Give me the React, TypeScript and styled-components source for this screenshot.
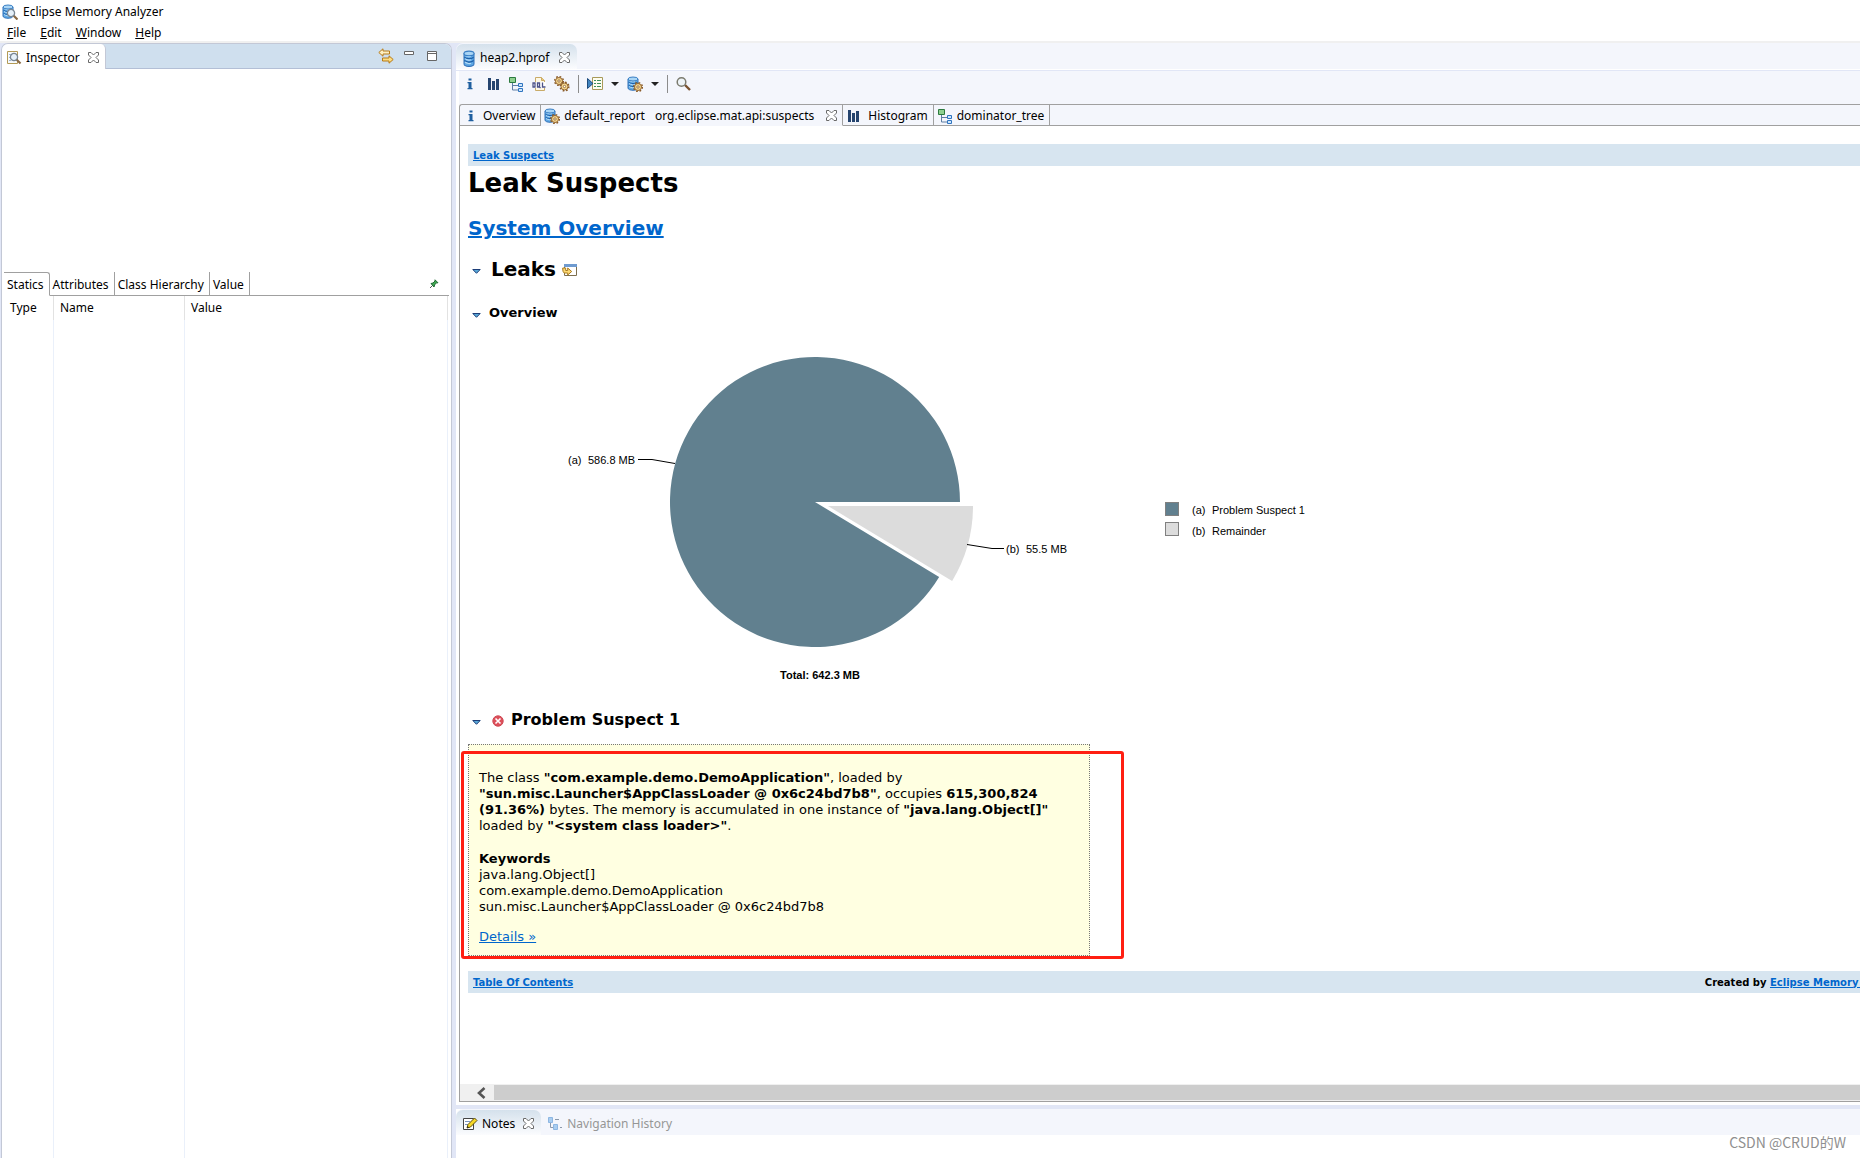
import React from "react";
import styled, { createGlobalStyle, css } from "styled-components";

const ui = `"Noto Sans", "Noto Sans CJK SC", sans-serif`;
const doc = `"DejaVu Sans", sans-serif`;
const chartFont = `"Liberation Sans", sans-serif`;

const c = {
  sash: "#e1e6f6",
  pane: "#f4f6fc",
  header: "#cfdfee",
  edge: "#c3c8d6",
  line: "#a0a0a0",
  link: "#0066cc",
  crumb: "#d7e5f0",
  note: "#ffffe1",
  slate: "#61808f",
  silver: "#dcdcdc",
};

const Global = createGlobalStyle`
  *, *::before, *::after { box-sizing: border-box; }
  body { margin: 0; background: #fff; color: #000; font: 12px/16px ${ui}; overflow: hidden; }
  button { margin: 0; padding: 0; border: 0; background: none; color: inherit; font: inherit; }
  svg { display: block; flex: none; }
`;

const Window = styled.div`
  position: relative;
  display: flex;
  flex-direction: column;
  height: 100vh;
`;

const TitleBar = styled.header`
  display: flex;
  align-items: center;
  gap: 5px;
  height: 24px;
  padding-left: 2px;
`;

const MenuBar = styled.nav`
  display: flex;
  align-items: center;
  gap: 14px;
  height: 19px;
  padding-left: 7px;
  border-bottom: 2px solid #f0f0f0;
`;

const MenuItem = styled.button`
  white-space: nowrap;
`;

const Workbench = styled.div`
  flex: 1;
  min-height: 0;
  display: grid;
  grid-template-columns: minmax(300px, 452px) minmax(0, 1fr);
  gap: 4px;
  background: ${c.sash};
`;

const Inspector = styled.aside`
  display: flex;
  flex-direction: column;
  margin-left: 1px;
  border: 1px solid ${c.edge};
  border-bottom: 0;
  border-radius: 7px 7px 0 0;
  background: #fff;
  overflow: hidden;
`;

const InspectorHead = styled.div`
  display: flex;
  justify-content: space-between;
  height: 25px;
  background: ${c.header};
`;

const InspectorTab = styled.div`
  display: flex;
  align-items: center;
  gap: 4px;
  padding: 2px 6px 0 4px;
  border-right: 1px solid ${c.edge};
  border-radius: 5px 5px 0 0;
  background: #fff;
`;

const HeadFill = styled.div`
  flex: 1;
  display: flex;
  justify-content: flex-end;
  align-items: center;
  gap: 7px;
  padding-right: 11px;
  border-bottom: 1px solid #b3bfd6;
`;

const IconButton = styled.button`
  display: flex;
  align-items: center;
  justify-content: center;
`;

const TabLabel = styled.span<{ $gap?: number }>`
  margin-right: ${(p) => p.$gap ?? 4}px;
  white-space: nowrap;
`;

const ObjectArea = styled.div`
  height: 203px;
`;

const DetailTabs = styled.div`
  display: flex;
  height: 24px;
  padding-left: 2px;
`;

const DetailTab = styled.button<{ $active?: boolean }>`
  padding: 2px 5px 0 3px;
  border-right: 1px solid ${c.line};
  border-bottom: 1px solid ${(p) => (p.$active ? "transparent" : c.line)};
  ${(p) =>
    p.$active &&
    css`
      padding-top: 1px;
      border-top: 1px solid ${c.line};
      border-top-right-radius: 3px;
    `}
`;

const DetailRest = styled.div`
  flex: 1;
  display: flex;
  align-items: center;
  justify-content: flex-end;
  margin-right: 2px;
  padding-right: 10px;
  border-bottom: 1px solid ${c.line};
`;

const Fields = styled.div`
  flex: 1;
  display: flex;
  padding-right: 3px;
`;

const FieldTable = styled.table`
  width: 100%;
  border-collapse: separate;
  border-spacing: 0;
  table-layout: fixed;

  th {
    height: 24px;
    padding: 0 6px;
    border-right: 1px solid #e2e2e2;
    font-weight: normal;
    text-align: left;
  }
  th:first-child {
    width: 52px;
    padding-left: 8px;
  }
  th:nth-child(2) {
    width: 131px;
  }
  td {
    border-right: 1px solid #eaf0fa;
  }
`;

const Main = styled.main`
  display: flex;
  flex-direction: column;
  min-width: 0;
  min-height: 0;
`;

const TabStrip = styled.div`
  display: flex;
  height: 27px;
  margin-bottom: 1px;
  padding-top: 1px;
  border-radius: 7px 0 0 0;
  border-bottom: 1px solid #fff;
  background: ${c.pane};
`;

const ViewTab = styled.button<{ $active?: boolean }>`
  display: flex;
  align-items: center;
  gap: 4px;
  padding: 2px 7px 0 6px;
  color: ${(p) => (p.$active ? "#000" : "#969696")};
  ${(p) =>
    p.$active &&
    css`
      border-radius: 7px 7px 0 0;
      background: linear-gradient(#d5e1ec, #fbfcfe);
    `}
`;

const Editor = styled.section`
  flex: 1;
  display: flex;
  flex-direction: column;
  min-height: 0;
  padding: 0 0 3px 3px;
  background: #fff;
  overflow: hidden;
`;

const Toolbar = styled.div`
  display: flex;
  align-items: center;
  gap: 8px;
  height: 33px;
  padding: 0 0 8px 3px;
  background: ${c.pane};
`;

const Divider = styled.span`
  width: 1px;
  height: 18px;
  background: #8c8c8c;
`;

const Caret = styled.span`
  width: 0;
  border: 4px solid transparent;
  border-top-color: #222;
  border-bottom: 0;
`;

const Pages = styled.div`
  display: flex;
  height: 22px;
  border-top: 1px solid ${c.line};
  border-left: 1px solid ${c.line};
  border-top-left-radius: 3px;
  background: ${c.pane};
`;

const PageTab = styled.button<{ $active?: boolean }>`
  display: flex;
  align-items: center;
  gap: 4px;
  padding: 1px 5px 0 3px;
  border-right: 1px solid ${c.line};
  border-bottom: 1px solid ${(p) => (p.$active ? "transparent" : c.line)};
`;

const PagesRest = styled.div`
  flex: 1;
  border-bottom: 1px solid ${c.line};
`;

const Browser = styled.div`
  flex: 1;
  display: flex;
  flex-direction: column;
  min-height: 0;
  border-left: 1px solid ${c.line};
  border-bottom: 1px solid ${c.line};
`;

const Viewport = styled.div`
  flex: 1;
  min-height: 0;
  overflow: hidden;
`;

const Report = styled.article`
  width: calc(100% + 56px);
  padding: 18px 0 0 8px;
  font: 13px/16px ${doc};

  a {
    color: ${c.link};
  }
`;

const Crumbs = styled.div`
  display: flex;
  align-items: center;
  justify-content: space-between;
  height: 22px;
  padding: 1px 5px 0;
  background: ${c.crumb};
  font-size: 10px;
  font-weight: bold;
  white-space: nowrap;
`;

const Title = styled.h1`
  margin: 0 0 15px;
  font-size: 26px;
  line-height: 34px;
`;

const Heading = styled.h2`
  display: flex;
  align-items: center;
  margin: 0 0 15px;
  font-size: 20px;
  line-height: 26px;
`;

const Section = styled(Heading)`
  gap: 6px;
  margin: 0 0 23px;
  padding-left: 4px;
`;

const SubSection = styled.h3`
  display: flex;
  align-items: center;
  gap: 4px;
  margin: 0;
  padding-left: 4px;
  font-size: 13px;
  line-height: 16px;
`;

const Problem = styled(SubSection)`
  gap: 6px;
  margin-bottom: 14px;
  font-size: 16px;
  line-height: 20px;
`;

const Twisty = styled.button`
  margin-right: 4px;
  padding-top: 4px;
`;

const NoteFrame = styled.div`
  position: relative;
  width: 622px;
  margin-bottom: 15px;
`;

const Note = styled.div`
  padding: 25px 10px 10px;
  border: 1px dotted #777;
  background: ${c.note};

  p {
    margin: 0 0 17px;
  }
  p:nth-child(2) {
    margin-bottom: 14px;
  }
  a {
    display: block;
    width: max-content;
  }
`;

const Marker = styled.div`
  position: absolute;
  inset: 7px -34px -3px -7px;
  border: 3px solid #ff1f12;
  border-radius: 3px;
`;

const ScrollBar = styled.div`
  display: flex;
  height: 17px;
  background: #f0f0f0;
`;

const ScrollArrow = styled.button`
  display: flex;
  align-items: center;
  justify-content: center;
  width: 34px;
  padding-left: 8px;
`;

const ScrollThumb = styled.div`
  flex: 1;
  margin: 1px 0;
  background: #cdcdcd;
`;

const NotesPane = styled.section`
  height: 49px;
  margin-top: 4px;
  background: #fff;
`;

const Watermark = styled.div`
  position: absolute;
  right: 14px;
  bottom: 6px;
  color: #8f8f8f;
  font: 14px/20px "Noto Sans CJK SC", sans-serif;
`;

/* ---------- icons ---------- */

const Svg = ({ w = 16, h = 16, children }: { w?: number; h?: number; children: React.ReactNode }) => (
  <svg width={w} height={h} viewBox={`0 0 ${w} ${h}`} fill="none" aria-hidden="true">
    {children}
  </svg>
);

const Cylinder = () => (
  <>
    <path d="M1 3v9c0 3 10 3 10 0V3z" fill="#5fa8e4" stroke="#2f70b8" />
    <path d="M1.500 6c1 2 8 2 9 0M1.500 9c1 2 8 2 9 0" stroke="#1d5fa8" />
    <path d="M2 7.500c2 1.500 5 1.500 6 1M2 10.500c2 1.500 5 1.500 6 1M2 4.500c2 1.500 5 1.500 6 1" stroke="#b5dcf8" />
    <ellipse cx="6" cy="3" rx="5" ry="2" fill="#a9d5f5" stroke="#3a7fc4" />
  </>
);

const Gear = ({ x, y }: { x: number; y: number }) => (
  <g transform={`translate(${x} ${y})`}>
    <circle r="4.300" stroke="#8a5c2a" strokeWidth="1.600" strokeDasharray="1.690 1.690" />
    <circle r="3.500" fill="#f6d893" stroke="#94652e" />
    <circle r="1.200" fill="#fff" stroke="#8a5a1e" strokeWidth=".8" />
  </g>
);

const Lens = ({ x, y }: { x: number; y: number }) => (
  <g transform={`translate(${x} ${y})`}>
    <path d="M2.500 2.500 6.500 6.500" stroke="#8a6a45" strokeWidth="2.200" />
    <circle r="3.600" fill="#e6f1fa" stroke="#7a8794" strokeWidth="1.300" />
  </g>
);

const AppIcon = () => (
  <Svg>
    <Cylinder />
    <Lens x={9} y={9} />
  </Svg>
);

const InspectorIcon = () => (
  <Svg>
    <path d="M1.500 1.500h10v12h-10z" fill="#f7fafd" stroke="#b39a55" />
    <path d="M3 4.500h4M3 7.500h2M3 10.500h2" stroke="#9fb6d4" />
    <Lens x={8} y={7} />
  </Svg>
);

const Close = () => (
  <Svg w={11} h={11}>
    <path
      d="M.5.5h2.500l2.500 2.500L8 .5h2.500V3L8 5.500 10.500 8v2.500H8L5.500 8 3 10.500H.5V8L3 5.500.5 3z"
      fill="#fff"
      stroke="#6a6a6a"
    />
  </Svg>
);

const LinkArrows = () => (
  <Svg>
    <path d="M.8 4.500 5 .8V3h6.500v3H5v2.200z" fill="#fdf0c4" stroke="#b77a16" />
    <path d="M15.200 11.500 11 7.800V10H4.500v3H11v2.200z" fill="#fcdc80" stroke="#b77a16" />
  </Svg>
);

const Minimize = () => (
  <Svg>
    <path d="M3.500 3.500h9v3h-9z" fill="#fff" stroke="#666" />
  </Svg>
);

const Maximize = () => (
  <Svg>
    <path d="M3.500 3.500h9v9h-9zM3.500 5.500h9" fill="#fff" stroke="#666" />
  </Svg>
);

const Pin = () => (
  <Svg w={10} h={10}>
    <path d="m1 9 3-3" stroke="#555" />
    <path d="m2 4.500 2-.5 2-2V.8l3 3H7.500l-1.800 2L5 8z" fill="#3fa650" stroke="#1f6b34" />
  </Svg>
);

const HeapIcon = () => (
  <Svg w={14} h={18}>
    <g transform="translate(1 1) scale(1 1.150)">
      <Cylinder />
    </g>
  </Svg>
);

const Info = () => (
  <Svg>
    <path d="M6.500 2.500h3v2h-3zM5.500 6h4v6h1v1.200h-5V12h1V7.200h-1z" fill="#1f5f9f" />
  </Svg>
);

const Bars = ({ w }: { w: number }) => (
  <Svg w={w} h={12}>
    <path d="M2 0h3v12h-3zM6 3h3v9h-3zM10 1h3v11h-3z" fill="#25446f" />
  </Svg>
);

const Tree = () => (
  <Svg>
    <path d="M4.500 7v7H10M4.500 9.500H10" stroke="#5f7fa5" />
    <path d="M1.500 1.500h6v5h-6z" fill="#8fd08f" stroke="#2c7a3f" />
    <path d="M10.500 7.500h4v3h-4zM10.500 12.500h4v3h-4z" fill="#cfe6fb" stroke="#2f74c0" />
  </Svg>
);

const Oql = () => (
  <Svg w={14}>
    <path d="M3.500 1.500h6l3 3v10h-9z" fill="#fdf8e6" stroke="#c9ab68" />
    <path d="M9.500 1.500v3h3" fill="#eac97c" stroke="#c9ab68" />
    <path d="M0 6h14v6H0z" fill="#fff" />
    <path
      d="M1 7h2v4H1zM5.500 7h2v4h-2zM6.500 10l2 2M10.500 6.500V11h3"
      stroke="#4c5288"
      strokeWidth="1.300"
    />
  </Svg>
);

const Gears = () => (
  <Svg>
    <Gear x={5} y={5} />
    <Gear x={10.5} y={10.5} />
  </Svg>
);

const Run = () => (
  <Svg>
    <path d="M5.500 1.500h10v12h-10z" fill="#fdfdf0" stroke="#a89a5a" />
    <path d="M7 4.500h2M7 7.500h2M7 10.500h2M10 4.500h4M10 7.500h4M10 10.500h4" stroke="#3f8f5a" />
    <path d="M.5 2.500v10L6 7.500z" fill="#3f83bf" stroke="#1c4a7c" />
  </Svg>
);

const HeapGear = () => (
  <Svg>
    <Cylinder />
    <Gear x={11} y={11} />
  </Svg>
);

const Search = () => (
  <Svg>
    <path d="m9 9 5 5" stroke="#7a5230" strokeWidth="2.400" />
    <circle cx="5.500" cy="6" r="4.300" fill="#eef4f8" stroke="#7b7b6f" strokeWidth="1.500" />
  </Svg>
);

const Twist = () => (
  <Svg w={9} h={5}>
    <path d="M.8.5h7.400L4.500 4.300z" fill="#58a8d8" stroke="#1c3d78" />
  </Svg>
);

const OpenIn = () => (
  <Svg>
    <path d="M2.500 4.500h12v10h-12z" fill="#fff" stroke="#7d6f50" />
    <path d="M2 3h13v3H2z" fill="#6f9bd0" />
    <path d="M.7 7h3v2.500h2V7l4 3.500-4 3.500v-2h-3c-1.500 0-2-2-2-5z" fill="#fbd873" stroke="#a97a1d" />
  </Svg>
);

const ErrorIcon = () => (
  <Svg w={14} h={14}>
    <circle cx="7" cy="8" r="5.200" fill="#dd4f5a" stroke="#cf4a55" />
    <path d="m4.500 5.500 5 5M9.500 5.500l-5 5" stroke="#fff" strokeWidth="1.600" />
  </Svg>
);

const NotesIcon = () => (
  <Svg>
    <path d="M1.500 2.500h10v11h-10z" fill="#fff" stroke="#444" />
    <path d="M3 5.500h5M3 8.500h3" stroke="#7b95bd" />
    <path d="m5 12 1-3.500L12.500 2 15 4.500 8.500 11z" fill="#f7d927" stroke="#5c4c10" />
    <path d="m5 12 .6-2 1.400 1.400z" fill="#222" />
  </Svg>
);

const HistoryIcon = () => (
  <Svg>
    <path d="M3.500 7v4.500H6M8 3.500h4M13 11.500h2" stroke="#8c99ab" />
    <path d="M1.500 1.500h4v5h-4zM6.500 8.500h4v5h-4z" fill="#a9cdf0" stroke="#8db6e2" />
  </Svg>
);

const ArrowLeft = () => (
  <Svg w={10} h={12}>
    <path d="M8.500 1 3 6l5.500 5" stroke="#555" strokeWidth="2.600" />
  </Svg>
);

/* ---------- chart ---------- */

const ChartSvg = styled.svg`
  font: 11px ${chartFont};
`;

const slices = [
  { key: "(a)", label: "Problem Suspect 1", value: 586.8, fill: c.slate },
  { key: "(b)", label: "Remainder", value: 55.5, fill: c.silver },
];

const wedge = (cx: number, cy: number, r: number, from: number, to: number) => {
  const at = (t: number) => `${cx + r * Math.cos(t)} ${cy + r * Math.sin(t)}`;
  return `M${cx} ${cy}L${at(from)}A${r} ${r} 0 ${to - from > Math.PI ? 1 : 0} 1 ${at(to)}Z`;
};

const PieChart = () => {
  const total = slices[0].value + slices[1].value;
  const split = (slices[1].value / total) * Math.PI * 2;
  return (
    <ChartSvg width={840} height={389} viewBox="0 0 840 389" role="img" aria-label="Leak overview">
      <path d={wedge(347, 181, 145, split, Math.PI * 2)} fill={c.slate} />
      <path d={wedge(360, 185, 145, 0, split)} fill={c.silver} />
      <path d="M170 138.500h14l23 4M499 223.500l25 4h12" fill="none" stroke="#000" />
      <text x={100} y={143}>(a)</text>
      <text x={120} y={143}>586.8 MB</text>
      <text x={538} y={232}>(b)</text>
      <text x={558} y={232}>55.5 MB</text>
      <text x={352} y={358} textAnchor="middle" fontWeight="bold">Total: 642.3 MB</text>
      {slices.map((s, i) => (
        <g key={s.key} transform={`translate(697 ${181 + i * 20})`}>
          <rect x=".5" y=".5" width="13" height="13" fill={s.fill} stroke="#808080" />
          <text x={27} y={12 + i}>{s.key}</text>
          <text x={47} y={12 + i}>{s.label}</text>
        </g>
      ))}
    </ChartSvg>
  );
};

/* ---------- page ---------- */

const tools = [
  { name: "Overview", icon: <Info /> },
  { name: "Histogram", icon: <Bars w={14} /> },
  { name: "Dominator tree", icon: <Tree /> },
  { name: "Object query", icon: <Oql /> },
  { name: "Thread overview", icon: <Gears /> },
];

export default function App() {
  return (
    <Window>
      <Global />
      <TitleBar>
        <AppIcon />
        Eclipse Memory Analyzer
      </TitleBar>
      <MenuBar>
        {["File", "Edit", "Window", "Help"].map((m) => (
          <MenuItem key={m}>
            <u>{m[0]}</u>
            {m.slice(1)}
          </MenuItem>
        ))}
      </MenuBar>

      <Workbench>
        <Inspector>
          <InspectorHead>
            <InspectorTab>
              <InspectorIcon />
              <TabLabel>Inspector</TabLabel>
              <IconButton aria-label="Close Inspector"><Close /></IconButton>
            </InspectorTab>
            <HeadFill>
              <IconButton aria-label="Link"><LinkArrows /></IconButton>
              <IconButton aria-label="Minimize"><Minimize /></IconButton>
              <IconButton aria-label="Maximize"><Maximize /></IconButton>
            </HeadFill>
          </InspectorHead>
          <ObjectArea />
          <DetailTabs>
            <DetailTab $active>Statics</DetailTab>
            <DetailTab>Attributes</DetailTab>
            <DetailTab>Class Hierarchy</DetailTab>
            <DetailTab>Value</DetailTab>
            <DetailRest>
              <IconButton aria-label="Pin tab"><Pin /></IconButton>
            </DetailRest>
          </DetailTabs>
          <Fields>
            <FieldTable>
              <thead>
                <tr><th>Type</th><th>Name</th><th>Value</th></tr>
              </thead>
              <tbody>
                <tr><td /><td /><td /></tr>
              </tbody>
            </FieldTable>
          </Fields>
        </Inspector>

        <Main>
          <TabStrip>
            <ViewTab $active>
              <HeapIcon />
              <TabLabel $gap={6}>heap2.hprof</TabLabel>
              <Close />
            </ViewTab>
          </TabStrip>
          <Editor>
            <Toolbar>
              {tools.map((t) => (
                <IconButton key={t.name} aria-label={t.name}>{t.icon}</IconButton>
              ))}
              <Divider />
              <IconButton aria-label="Run report"><Run /></IconButton>
              <Caret />
              <IconButton aria-label="Query browser"><HeapGear /></IconButton>
              <Caret />
              <Divider />
              <IconButton aria-label="Find object"><Search /></IconButton>
            </Toolbar>
            <Pages>
              <PageTab><Info />Overview</PageTab>
              <PageTab $active>
                <HeapGear />
                <TabLabel $gap={6}>default_report</TabLabel>
                <TabLabel $gap={8}>org.eclipse.mat.api:suspects</TabLabel>
                <Close />
              </PageTab>
              <PageTab><Bars w={18} />Histogram</PageTab>
              <PageTab><Tree />dominator_tree</PageTab>
              <PagesRest />
            </Pages>
            <Browser>
              <Viewport>
                <Report>
                  <Crumbs><a href="#leak-suspects">Leak Suspects</a></Crumbs>
                  <Title id="leak-suspects">Leak Suspects</Title>
                  <Heading><a href="#system-overview">System Overview</a></Heading>
                  <Section>
                    <Twisty aria-label="Collapse Leaks"><Twist /></Twisty>
                    Leaks
                    <OpenIn />
                  </Section>
                  <SubSection>
                    <Twisty aria-label="Collapse Overview"><Twist /></Twisty>
                    Overview
                  </SubSection>
                  <PieChart />
                  <Problem>
                    <Twisty aria-label="Collapse Problem Suspect 1"><Twist /></Twisty>
                    <ErrorIcon />
                    Problem Suspect 1
                  </Problem>
                  <NoteFrame>
                    <Note>
                      <p>
                        The class <b>"com.example.demo.DemoApplication"</b>, loaded by{" "}
                        <b>"sun.misc.Launcher$AppClassLoader @ 0x6c24bd7b8"</b>, occupies{" "}
                        <b>615,300,824 (91.36%)</b> bytes. The memory is accumulated in one instance of{" "}
                        <b>"java.lang.Object[]"</b> loaded by <b>"&lt;system class loader&gt;"</b>.
                      </p>
                      <p>
                        <b>Keywords</b>
                        <br />
                        java.lang.Object[]
                        <br />
                        com.example.demo.DemoApplication
                        <br />
                        sun.misc.Launcher$AppClassLoader @ 0x6c24bd7b8
                      </p>
                      <a href="#details">Details »</a>
                    </Note>
                    <Marker />
                  </NoteFrame>
                  <Crumbs>
                    <a href="#toc">Table Of Contents</a>
                    <span>
                      Created by <a href="#mat">Eclipse Memory Analyzer</a>
                    </span>
                  </Crumbs>
                </Report>
              </Viewport>
              <ScrollBar>
                <ScrollArrow aria-label="Scroll left"><ArrowLeft /></ScrollArrow>
                <ScrollThumb />
              </ScrollBar>
            </Browser>
          </Editor>
          <NotesPane>
            <TabStrip>
              <ViewTab $active>
                <NotesIcon />
                <TabLabel>Notes</TabLabel>
                <Close />
              </ViewTab>
              <ViewTab>
                <HistoryIcon />
                Navigation History
              </ViewTab>
            </TabStrip>
          </NotesPane>
        </Main>
      </Workbench>
      <Watermark>CSDN @CRUD的W</Watermark>
    </Window>
  );
}
